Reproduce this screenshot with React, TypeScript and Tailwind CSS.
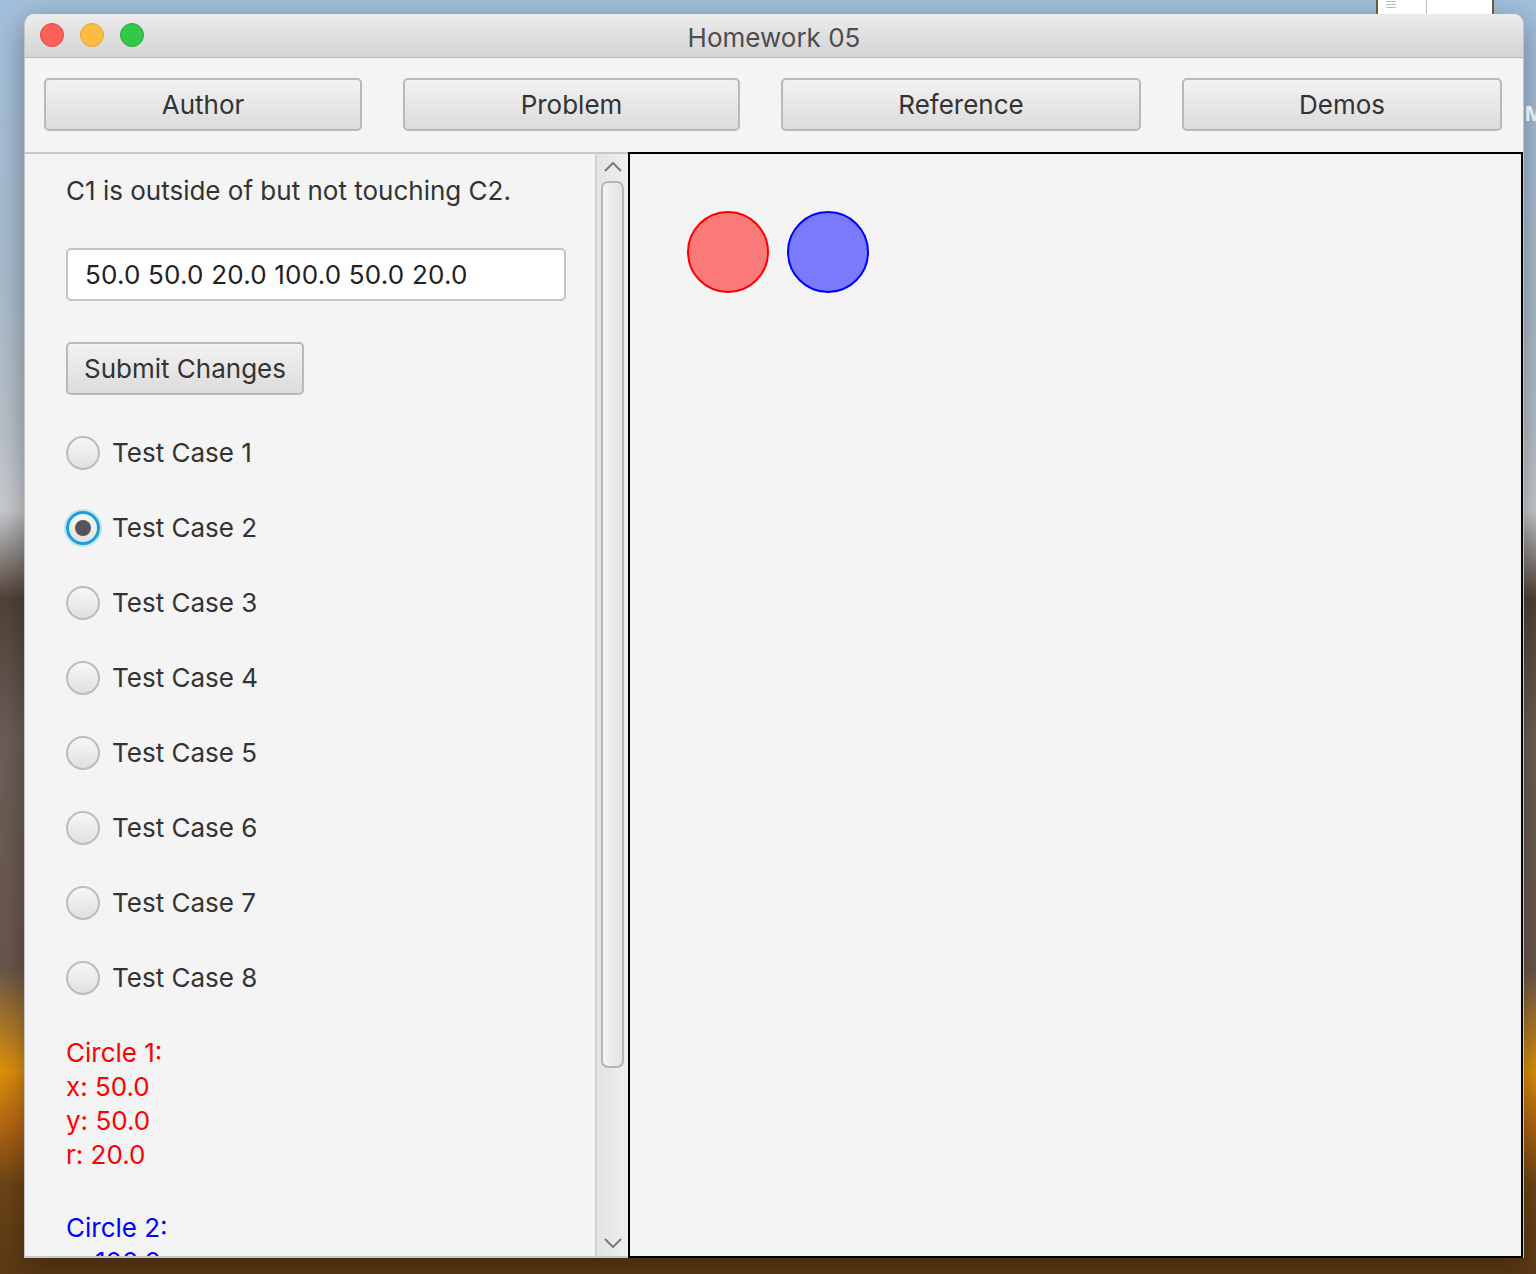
import { FC } from 'react';

const cases = [1, 2, 3, 4, 5, 6, 7, 8];

const TopButton: FC<{ label: string; width: string }> = ({ label, width }) => (
  <div
    className={`${width} h-[53px] flex items-center justify-center rounded-[5px] border-2 border-[#b9b9b9] bg-[linear-gradient(to_bottom,#f2f2f2,#dcdcdc)] text-[26px] text-[#333]`}
  >
    {label}
  </div>
);

const Radio: FC<{ n: number; checked?: boolean }> = ({ n, checked }) => (
  <div className="h-[34px] flex items-center gap-[12px]">
    {checked ? (
      <div className="w-[34px] h-[34px] rounded-full border-[3px] border-[#1b9fd8] shadow-[0_0_0_2px_#bfe3f3] bg-[linear-gradient(to_bottom,#f6f6f6,#e2e2e2)] flex items-center justify-center">
        <div className="w-[16px] h-[16px] rounded-full bg-[#555]" />
      </div>
    ) : (
      <div className="w-[34px] h-[34px] rounded-full border-2 border-[#bcbcbc] bg-[linear-gradient(to_bottom,#f7f7f7,#e0e0e0)]" />
    )}
    <span className="text-[26px] text-[#333] leading-[34px]">Test Case {n}</span>
  </div>
);

const Chevron: FC<{ down?: boolean }> = ({ down }) => (
  <svg width="18" height="10" viewBox="0 0 18 10" className="mx-auto">
    <path
      d={down ? 'M1 1 L9 9 L17 1' : 'M1 9 L9 1 L17 9'}
      fill="none"
      stroke="#7a7a7a"
      strokeWidth="2"
    />
  </svg>
);

export default function App() {
  return (
    <div
      className="relative w-[1536px] h-[1274px] overflow-hidden pt-[14px] pl-[24px] bg-[linear-gradient(to_bottom,#a2bfdc_0%,#a9bccd_22%,#b9c1c9_34%,#c9cdd1_40%,#514238_47%,#6d5f58_58%,#6a574c_76%,#e0920c_84%,#b86a12_88%,#6e4516_93%,#5c3a14_100%)]"
      style={{ fontFamily: 'Inter, "Liberation Sans", Arial, sans-serif' }}
    >
      {/* another window peeking out at the top */}
      <div className="absolute left-[1376px] top-0 w-[118px] h-[14px] bg-white border-x-2 border-[#6a5a40] flex">
        <div className="w-[49px] border-r border-[#bbb] flex flex-col gap-[2px] pl-[8px] pt-[1px]">
          <div className="w-[10px] h-[1px] bg-[#bbb]" />
          <div className="w-[10px] h-[1px] bg-[#bbb]" />
          <div className="w-[10px] h-[1px] bg-[#bbb]" />
        </div>
      </div>
      <div className="absolute left-[1525px] top-[104px] text-[20px] font-bold text-[#e6e6e6] leading-none">M</div>

      <div className="w-[1500px] h-[1244px] flex flex-col rounded-t-[10px] overflow-hidden shadow-[0_8px_30px_rgba(0,0,0,0.35)] border-x border-[#c4c4c4] bg-[#f4f4f4]">
        {/* title bar */}
        <div className="h-[44px] shrink-0 relative flex items-center border-b border-[#b6b6b6] bg-[linear-gradient(to_bottom,#ececec,#d4d4d4)]">
          <div className="flex items-center gap-[16px] pl-[15px] -mt-[1px]">
            <div className="w-[24px] h-[24px] rounded-full bg-[#fc605c] border border-[#e2463f]" />
            <div className="w-[24px] h-[24px] rounded-full bg-[#fdbc40] border border-[#dea236]" />
            <div className="w-[24px] h-[24px] rounded-full bg-[#34c84a] border border-[#27aa35]" />
          </div>
          <div className="absolute inset-0 flex items-center justify-center pt-[3px] text-[26px] text-[#4d4d4d]">
            Homework 05
          </div>
        </div>

        {/* top buttons */}
        <div className="h-[94px] shrink-0 flex items-start gap-[41px] pt-[20px] pl-[19px]">
          <TopButton label="Author" width="w-[318px]" />
          <TopButton label="Problem" width="w-[337px]" />
          <TopButton label="Reference" width="w-[360px]" />
          <TopButton label="Demos" width="w-[320px]" />
        </div>

        {/* content */}
        <div className="flex-1 flex min-h-0">
          <div className="w-[570px] shrink-0 border-t-2 border-b-2 border-[#c8c8c8] overflow-hidden pl-[41px] pt-[20px]">
            <div className="text-[26px] leading-[34px] text-[#333]">C1 is outside of but not touching C2.</div>
            <div className="mt-[40px] w-[500px] h-[53px] rounded-[5px] border-2 border-[#c4c4c4] bg-white flex items-center pl-[17px] text-[26px] text-[#222] tracking-[0.2px]">
              50.0 50.0 20.0 100.0 50.0 20.0
            </div>
            <div className="mt-[41px] w-[238px] h-[53px] rounded-[5px] border-2 border-[#b9b9b9] bg-[linear-gradient(to_bottom,#f2f2f2,#dcdcdc)] flex items-center justify-center text-[26px] text-[#333]">
              Submit Changes
            </div>
            <div className="mt-[41px] flex flex-col gap-[41px]">
              {cases.map((n) => (
                <Radio key={n} n={n} checked={n === 2} />
              ))}
            </div>
            <div className="mt-[41px] text-[26px] leading-[34px] text-[#ff0000]">
              <div>Circle 1:</div>
              <div>x: 50.0</div>
              <div>y: 50.0</div>
              <div>r: 20.0</div>
            </div>
            <div className="mt-[39px] text-[26px] leading-[34px] text-[#0000ff]">
              <div>Circle 2:</div>
              <div>x: 100.0</div>
              <div>y: 50.0</div>
              <div>r: 20.0</div>
            </div>
          </div>

          {/* scrollbar */}
          <div className="w-[33px] shrink-0 flex flex-col border-l-2 border-[#d2d2d2] border-t-2 border-t-[#c8c8c8] border-b-2 border-b-[#c8c8c8] bg-[linear-gradient(to_right,#e4e4e4,#efefef)] pt-[8px] pb-[8px]">
            <Chevron />
            <div className="mx-auto mt-[9px] w-[23px] h-[887px] rounded-[7px] border-2 border-[#b6b6b6] bg-[linear-gradient(to_right,#f4f4f4,#e2e2e2)]" />
            <div className="flex-1" />
            <Chevron down />
          </div>

          {/* canvas */}
          <div className="flex-1 border-2 border-black bg-[#f4f4f4]">
            <svg width="300" height="200">
              <circle cx="98" cy="98" r="40" fill="rgba(255,0,0,0.5)" stroke="#ff0000" strokeWidth="2" />
              <circle cx="198" cy="98" r="40" fill="rgba(0,0,255,0.5)" stroke="#0000ff" strokeWidth="2" />
            </svg>
          </div>
        </div>
      </div>
    </div>
  );
}
